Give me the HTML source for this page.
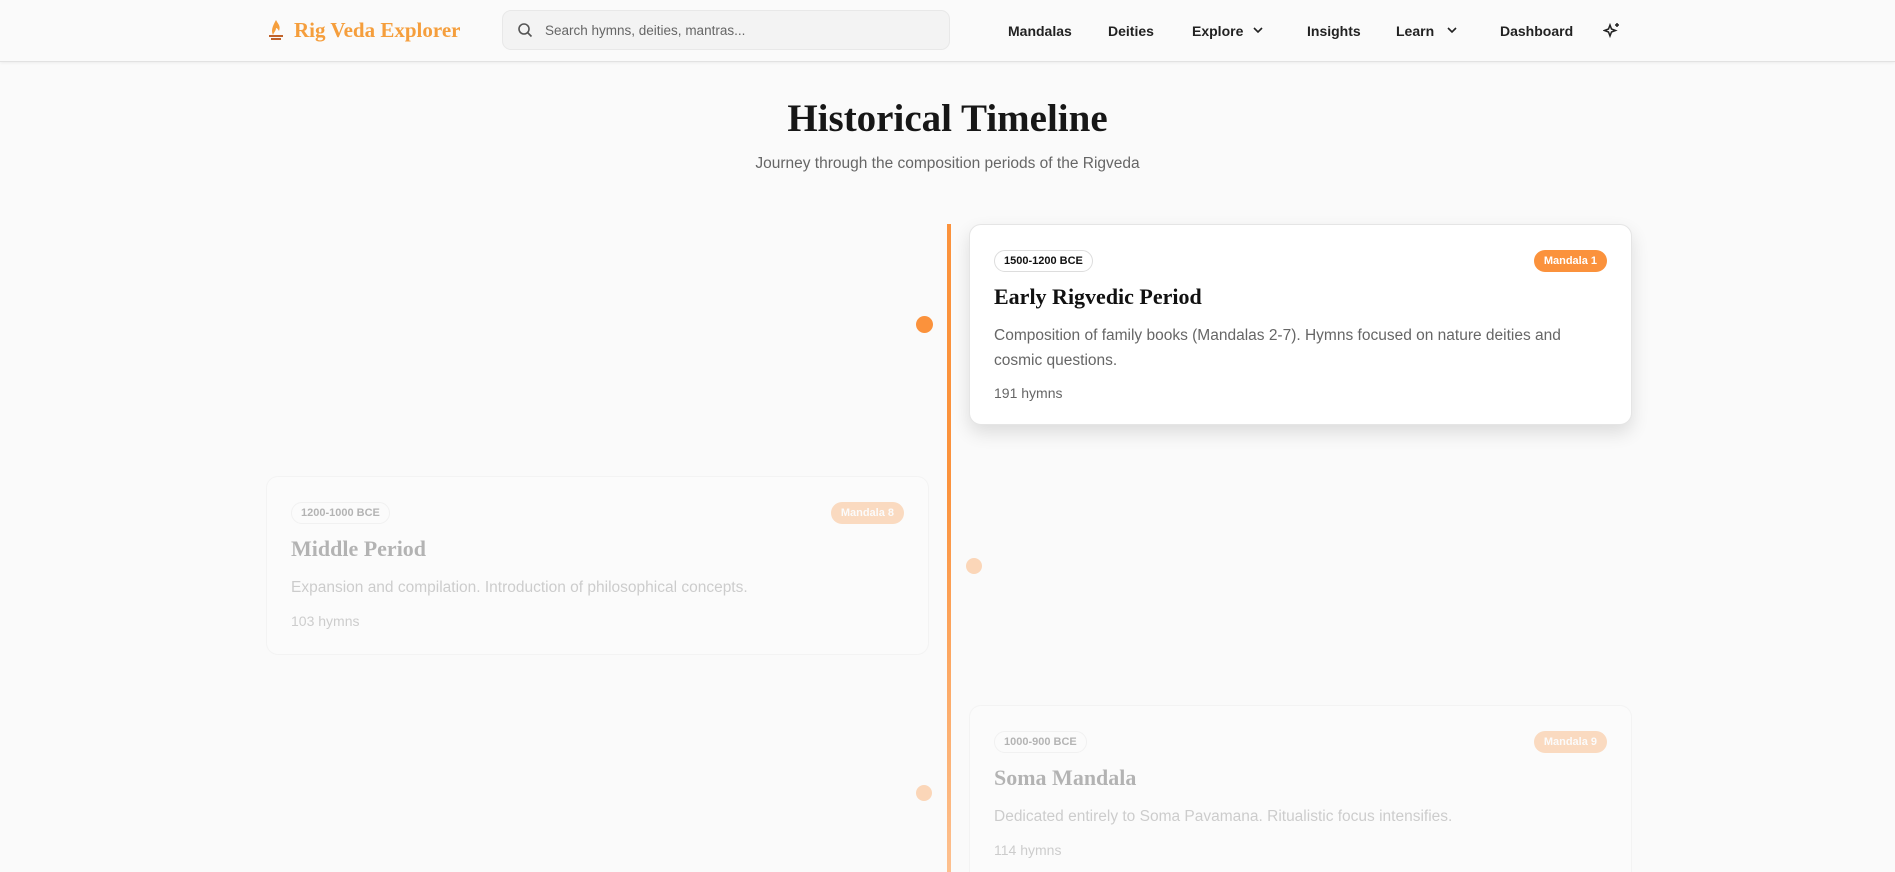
<!DOCTYPE html>
<html><head><meta charset="utf-8"><style>
*{box-sizing:border-box;margin:0;padding:0}
html,body{width:1895px;height:872px;overflow:hidden}
body{background:#fafafa;font-family:"Liberation Sans",sans-serif;position:relative;color:#1a1a1a}
.nav{position:absolute;left:0;top:0;width:1895px;height:62px;background:#fafafa;border-bottom:1px solid #e2e2e2;box-shadow:0 1px 3px rgba(0,0,0,.06)}
.logo{position:absolute;left:266px;top:18px;font-family:"Liberation Serif",serif;font-weight:bold;font-size:21px;color:#f59e3c}
.logo svg{vertical-align:-3px;margin-right:8px}
.search{position:absolute;left:502px;top:10px;width:448px;height:40px;background:#f3f3f3;border:1px solid #e8e8e8;border-radius:9px}
.search span{position:absolute;left:42px;top:12px;font-size:13.5px;color:#666}
.search svg{position:absolute;left:14px;top:11px}
.ni{position:absolute;top:23px;font-size:14px;font-weight:bold;color:#222}
.chev{position:absolute;top:25px}
h1{position:absolute;left:0;width:1895px;top:96px;text-align:center;font-family:"Liberation Serif",serif;font-size:39px;font-weight:bold;color:#171717}
.sub{position:absolute;left:0;width:1895px;top:155px;text-align:center;font-size:15.5px;color:#666}
.line{position:absolute;left:947px;top:224px;width:4px;height:648px;background:linear-gradient(#fb923c,#fb923c 40%,#fdc08f)}
.dot{position:absolute;width:17px;height:17px;border-radius:50%;background:#fb923c}
.card{position:absolute;background:#fff;border:1px solid #e5e5e5;border-radius:12px;padding:0 24px}
.date{position:absolute;left:24px;top:25px;height:22px;padding:0 9px;border:1px solid #ddd;border-radius:11px;font-size:11px;font-weight:bold;line-height:20px;color:#111}
.md{position:absolute;right:24px;top:25px;height:22px;padding:0 10px;background:#fb923c;border-radius:11px;font-size:11px;font-weight:bold;line-height:22px;color:#fff}
.tt{position:absolute;left:24px;top:59px;font-family:"Liberation Serif",serif;font-weight:bold;font-size:22px;color:#111}
.ds{position:absolute;left:24px;top:98px;right:24px;font-size:15.5px;line-height:25px;color:#666}
.hy{position:absolute;left:24px;font-size:14px;color:#666}
.faded{opacity:.3;box-shadow:none}
</style></head><body>
<div class="nav">
 <div class="logo"><svg width="20" height="22" viewBox="0 0 20 22"><path d="M10 2c2 4 5 6 3 11-1-2-2-3-3-3 0 3-2 4-3 7-2-4-1-8 3-15z" fill="#f59e3c"/><path d="M3 18h14M5 21h10" stroke="#c0622a" stroke-width="2"/></svg>Rig Veda Explorer</div>
 <div class="search"><svg width="16" height="16" viewBox="0 0 16 16" fill="none" stroke="#555" stroke-width="1.6"><circle cx="7" cy="7" r="5"/><path d="M11 11l3.5 3.5"/></svg><span>Search hymns, deities, mantras...</span></div>
 <div class="ni" style="left:1008px">Mandalas</div>
 <div class="ni" style="left:1108px">Deities</div>
 <div class="ni" style="left:1192px">Explore</div>
 <svg class="chev" style="left:1252px" width="12" height="10" viewBox="0 0 12 10" fill="none" stroke="#222" stroke-width="1.6"><path d="M2 3l4 4 4-4"/></svg>
 <div class="ni" style="left:1307px">Insights</div>
 <div class="ni" style="left:1396px">Learn</div>
 <svg class="chev" style="left:1446px" width="12" height="10" viewBox="0 0 12 10" fill="none" stroke="#222" stroke-width="1.6"><path d="M2 3l4 4 4-4"/></svg>
 <div class="ni" style="left:1500px">Dashboard</div>
 <svg style="position:absolute;left:1603px;top:21px" width="18" height="18" viewBox="0 0 18 18" fill="none" stroke="#222" stroke-width="1.5"><path d="M7 4l1.5 4 4 1.5-4 1.5L7 15l-1.5-4-4-1.5 4-1.5z"/><path d="M14 2v4M12 4h4"/></svg>
</div>
<h1>Historical Timeline</h1>
<div class="sub">Journey through the composition periods of the Rigveda</div>
<div class="line"></div>
<div class="dot" style="left:916px;top:316px"></div>
<div class="dot" style="left:966px;top:558px;opacity:.35;width:16px;height:16px"></div>
<div class="dot" style="left:916px;top:785px;opacity:.35;width:16px;height:16px"></div>

<div class="card" style="left:969px;top:224px;width:663px;height:201px;box-shadow:0 8px 18px rgba(0,0,0,.12)">
 <div class="date">1500-1200 BCE</div><div class="md">Mandala 1</div>
 <div class="tt">Early Rigvedic Period</div>
 <div class="ds">Composition of family books (Mandalas 2-7). Hymns focused on nature deities and cosmic questions.</div>
 <div class="hy" style="top:160px">191 hymns</div>
</div>
<div class="card faded" style="left:266px;top:476px;width:663px;height:179px">
 <div class="date">1200-1000 BCE</div><div class="md">Mandala 8</div>
 <div class="tt">Middle Period</div>
 <div class="ds">Expansion and compilation. Introduction of philosophical concepts.</div>
 <div class="hy" style="top:136px">103 hymns</div>
</div>
<div class="card faded" style="left:969px;top:705px;width:663px;height:167px;border-bottom:none;border-radius:12px 12px 0 0">
 <div class="date">1000-900 BCE</div><div class="md">Mandala 9</div>
 <div class="tt">Soma Mandala</div>
 <div class="ds">Dedicated entirely to Soma Pavamana. Ritualistic focus intensifies.</div>
 <div class="hy" style="top:136px">114 hymns</div>
</div>
</body></html>
